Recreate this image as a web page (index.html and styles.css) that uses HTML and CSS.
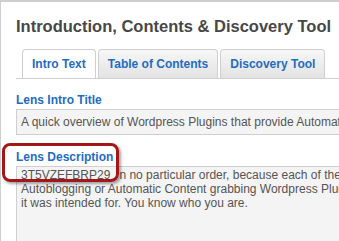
FILE: index.html
```html
<!DOCTYPE html>
<html>

<head lang="en">
    <meta charset="UTF-8">
    <title>Introduction, Contents &amp; Discovery Tool</title>
    <link rel="stylesheet" href="styles.css">
</head>

<body>
<div class="page">
    <h1 class="title">Introduction, Contents &amp; Discovery Tool</h1>

    <!-- tabs -->
    <ul class="tabs">
        <li class="current"><a href="#">Intro Text</a></li>
        <li><a href="#">Table of Contents</a></li>
        <li><a href="#">Discovery Tool</a></li>
    </ul>

    <div class="field">
        <label class="label">Lens Intro Title</label>
        <div class="input">A quick overview of Wordpress Plugins that provide Automatic Content for your blog</div>
    </div>

    <div class="field desc">
        <label class="label">Lens Description</label>
        <div class="textarea">
            <span class="code">3T5VZEFBRP29</span>n no particular order, because each of the<br>
            Autoblogging or Automatic Content grabbing Wordpress Plugins has a job<br>
            it was intended for. You know who you are.
        </div>
        <!-- red callout -->
        <div class="callout"></div>
    </div>
</div>
</body>

</html>
```

FILE: styles.css
```css
* {
    padding: 0;
    margin: 0;
    box-sizing: border-box;
}

ul {
    list-style: none;
}

a {
    text-decoration: none;
}

body {
    font-family: "Liberation Sans", Arial, sans-serif;
    background: #fff;
    overflow: hidden;
}

.page {
    height: 241px;
    border-top: 2px solid #cfcfcf;
    border-left: 1px solid #cfcfcf;
    padding-left: 15px;
}

.title {
    padding-top: 14px;
    font-size: 16.5px;
    line-height: 20px;
    font-weight: bold;
    color: #474747;
    white-space: nowrap;
}

.tabs {
    display: flex;
    gap: 2px;
    margin-top: 13px;
    padding-left: 6px;
    border-bottom: 1px solid #cfcfcf;
    height: 30px;
}

.tabs li {
    height: 29px;
    border: 1px solid #cfcfcf;
    border-bottom: none;
    border-radius: 4px 4px 0 0;
    background: linear-gradient(#f7f7f7, #e3e3e3);
    padding: 0 9px;
}

.tabs li.current {
    background: #fff;
}

.tabs a {
    display: block;
    line-height: 28px;
    font-size: 12px;
    font-weight: bold;
    color: #1f6cc2;
    white-space: nowrap;
}

.field {
    display: flex;
    flex-direction: column;
    gap: 2px;
    margin-top: 14px;
}

.field.desc {
    position: relative;
    margin-top: 15px;
}

.label {
    font-size: 12px;
    line-height: 14px;
    font-weight: bold;
    color: #1f6cc2;
}

.input,
.textarea {
    width: 400px;
    border: 1px solid #cfcfcf;
    background: #f4f4f4;
    font-size: 12px;
    color: #555;
    white-space: nowrap;
    overflow: hidden;
    padding-left: 4px;
}

.input {
    height: 26px;
    line-height: 24px;
}

.textarea {
    height: 100px;
    line-height: 14px;
    padding-top: 1px;
}

.code {
    margin-right: 9px;
}

.callout {
    position: absolute;
    left: -14px;
    top: -7px;
    width: 117px;
    height: 39px;
    border: 3px solid #a3171b;
    border-radius: 8px;
    box-shadow: 2px 2px 3px rgba(0, 0, 0, .35);
}
```
